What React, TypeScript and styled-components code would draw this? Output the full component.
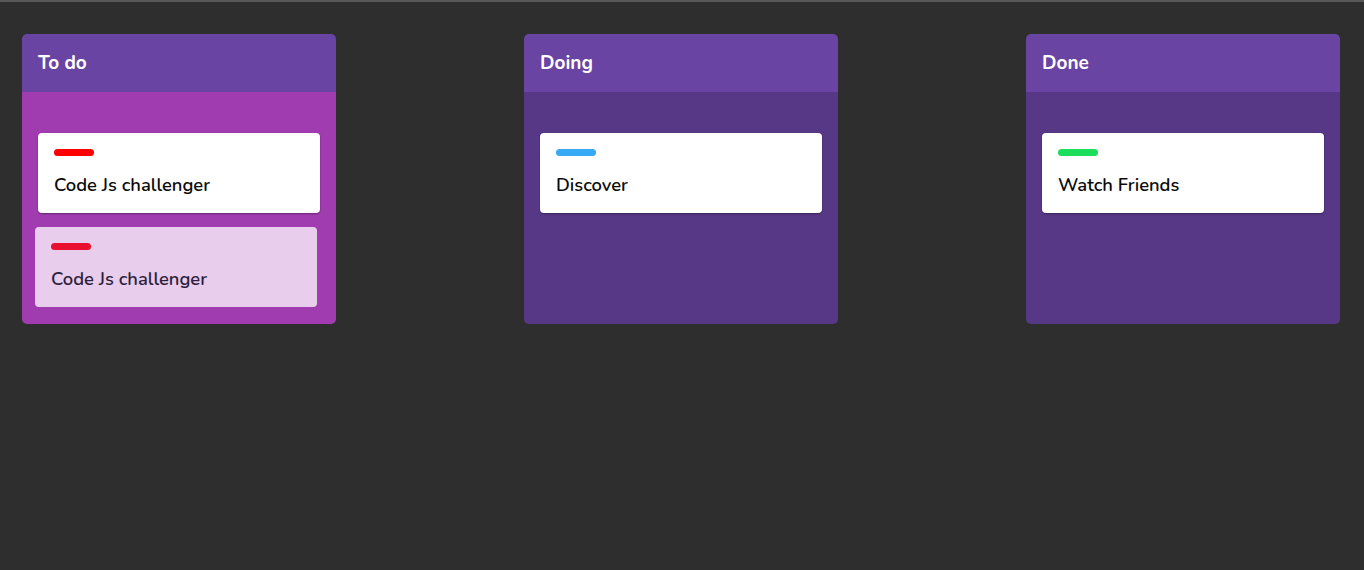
import React from "react";
import styled, { createGlobalStyle } from "styled-components";

const Global = createGlobalStyle`
  html, body { margin: 0; padding: 0; }
  body {
    background: #2e2e2e;
    border-top: 2px solid #585858;
    font-family: "Nunito", "Lato", "Noto Sans", sans-serif;
    min-height: 568px;
  }
`;

const Board = styled.div`
  display: flex;
  justify-content: space-between;
  align-items: flex-start;
  padding: 32px 24px 0 22px;
`;

const Column = styled.section`
  width: 314px;
  border-radius: 5px;
  overflow: hidden;
  display: flex;
  flex-direction: column;
`;

const Header = styled.h2`
  margin: 0;
  height: 58px;
  display: flex;
  align-items: center;
  padding: 0 16px;
  background: #6944a3;
  color: #ffffff;
  font-size: 19px;
  font-weight: 700;
`;

const Body = styled.div<{ $over?: boolean }>`
  background: ${(p) => (p.$over ? "#a03cb0" : "#573887")};
  min-height: 232px;
  box-sizing: border-box;
  padding: 41px 16px 17px;
  display: flex;
  flex-direction: column;
  gap: 14px;
`;

const Card = styled.div<{ $dragging?: boolean }>`
  height: 80px;
  box-sizing: border-box;
  padding: 16px;
  border-radius: 4px;
  background: ${(p) => (p.$dragging ? "#e8cdec" : "#ffffff")};
  box-shadow: ${(p) => (p.$dragging ? "none" : "0 1px 2px rgba(0,0,0,0.35)")};
  transform: ${(p) => (p.$dragging ? "translateX(-3px)" : "none")};
  display: flex;
  flex-direction: column;
  gap: 16px;
`;

const Tag = styled.span<{ $color: string }>`
  display: block;
  width: 40px;
  height: 8px;
  border-radius: 4px;
  background: ${(p) => p.$color};
`;

const Title = styled.p<{ $dragging?: boolean }>`
  margin: 0;
  line-height: 25px;
  font-size: 18.4px;
  font-weight: 600;
  color: ${(p) => (p.$dragging ? "#2e1f3d" : "#0b0b0b")};
`;

type Item = { title: string; color: string; dragging?: boolean };

const columns: { name: string; over?: boolean; items: Item[] }[] = [
  {
    name: "To do",
    over: true,
    items: [
      { title: "Code Js challenger", color: "#ff0000" },
      { title: "Code Js challenger", color: "#e8102e", dragging: true },
    ],
  },
  { name: "Doing", items: [{ title: "Discover", color: "#36aaf5" }] },
  { name: "Done", items: [{ title: "Watch Friends", color: "#1cdd5c" }] },
];

export default function App() {
  return (
    <>
      <Global />
      <Board>
        {columns.map((c) => (
          <Column key={c.name}>
            <Header>{c.name}</Header>
            <Body $over={c.over}>
              {c.items.map((it, i) => (
                <Card key={i} $dragging={it.dragging}>
                  <Tag $color={it.color} />
                  <Title $dragging={it.dragging}>{it.title}</Title>
                </Card>
              ))}
            </Body>
          </Column>
        ))}
      </Board>
    </>
  );
}
